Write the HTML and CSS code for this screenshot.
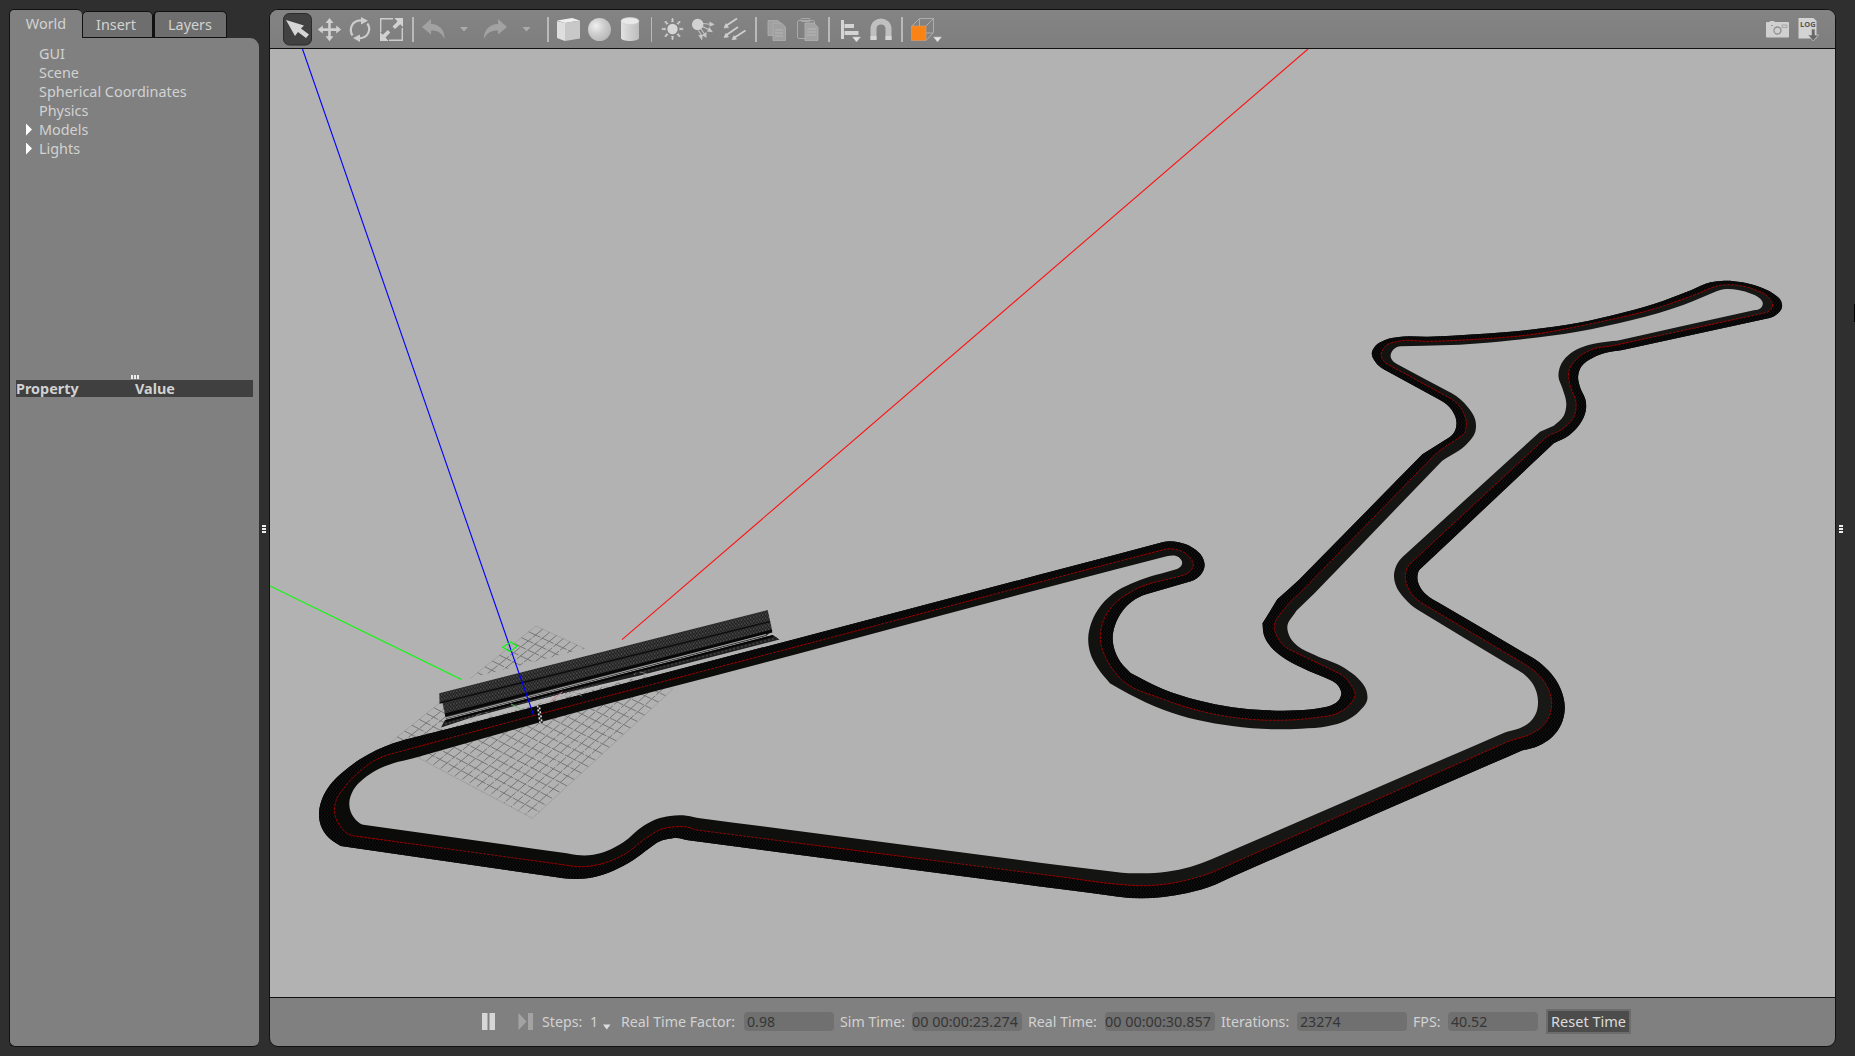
FILE: index.html
```html
<!DOCTYPE html>
<html lang="en">
<head>
<meta charset="utf-8">
<title>Gazebo</title>
<link rel="stylesheet" href="styles.css">
</head>
<body>
<div class="window">
  <aside class="sidebar">
    <nav class="tabs">
      <div class="tab tab-active">World</div>
      <div class="tab tab-insert">Insert</div>
      <div class="tab tab-layers">Layers</div>
    </nav>
    <div class="panel">
      <ul class="tree">
        <li>GUI</li>
        <li>Scene</li>
        <li>Spherical Coordinates</li>
        <li>Physics</li>
        <li class="branch">Models</li>
        <li class="branch">Lights</li>
      </ul>
      <div class="grip grip-h"><i></i><i></i><i></i></div>
      <div class="props"><span>Property</span><span>Value</span></div>
    </div>
  </aside>
  <div class="splitter"><div class="grip grip-v"><i></i><i></i><i></i></div></div>
  <main class="main">
    <header class="toolbar">
      <svg width="39" height="38" viewBox="274 10 39 38"><rect x="283.5" y="13.5" width="28" height="31.500" rx="6" fill="#414141" stroke="#2b2b2b"/><path d="M286 20 L304 25.500 L301 28.500 L309 34.500 L306 38 L298 32 L295 36 Z" fill="#d6d6d6"/></svg>
      <svg width="32" height="38" viewBox="313 10 32 38"><g fill="#d0d0d0"><path d="M329.500 18 l4 5 h-2.700 v5.300 h5.400 v-2.700 l5 4 l-5 4 v-2.700 h-5.400 v5.300 h2.700 l-4 5 l-4 -5 h2.700 v-5.300 h-5.400 v2.700 l-5 -4 l5 -4 v2.700 h5.400 v-5.300 h-2.700z"/></g></svg>
      <svg width="31" height="38" viewBox="345 10 31 38"><g fill="none" stroke="#cdcdcd" stroke-width="2.200"><path d="M352.500 35.500 C349 30 351 20.500 361 20.300"/><path d="M367.300 23.500 C371.500 29 368.500 38 359 38.300"/></g><path d="M361 17 l7 3.800 l-7 3.600z M360 34.500 l-7 3.600 l7 4z" fill="#cdcdcd"/></svg>
      <svg width="31" height="38" viewBox="376 10 31 38"><g fill="none" stroke="#cdcdcd" stroke-width="1.400"><path d="M393 18.700 H380.700 V32 M389 40.300 H402.300 V28"/></g><path d="M403 18 v9 l-2.800 -2.700 l-5.200 4.700 l-2.500 -2.500 l5 -5 l-3 -3.500z M380 41 v-9 l2.800 2.700 l5 -4.700 l2.500 2.500 l-4.800 5 l3 3.500z" fill="#d2d2d2"/></svg>
      <i class="sep sep-a"></i>
      <svg width="30" height="38" viewBox="419 10 30 38"><path d="M422 27 L431 19 V24 C440 24 445 31 444.500 39 C442 33 438 30.500 431 30.500 V34.500Z" fill="#a2a2a2"/></svg>
      <svg width="30" height="38" viewBox="449 10 30 38"><path d="M460 27h8l-4 4.500z" fill="#ababab"/></svg>
      <svg width="32" height="38" viewBox="479 10 32 38"><path d="M507 27 L498 19 V24 C489 24 483.500 31 484 39 C486.500 33 491 30.500 498 30.500 V34.500Z" fill="#a2a2a2"/></svg>
      <svg width="30" height="38" viewBox="511 10 30 38"><path d="M522.500 27h8l-4 4.500z" fill="#ababab"/></svg>
      <i class="sep sep-b"></i>
      <svg width="28" height="38" viewBox="555 10 28 38"><path d="M557 21l8 2v18l-8-3z" fill="#dedede"/><path d="M557 20.500l15-2.500 8 2.500-15 2.500z" fill="#eee"/><path d="M565 23l15-2.500v18l-15 2.500z" fill="#c8c8c8"/></svg>
      <svg width="33" height="38" viewBox="583 10 33 38"><defs><radialGradient id="ball" cx=".35" cy=".35" r=".7"><stop offset="0" stop-color="#f0f0f0"/><stop offset=".5" stop-color="#cecece"/><stop offset="1" stop-color="#b8b8b8"/></radialGradient></defs><circle cx="599.500" cy="29.500" r="11.500" fill="url(#ball)"/></svg>
      <svg width="29" height="38" viewBox="616 10 29 38"><defs><linearGradient id="cyl"><stop offset="0" stop-color="#e2e2e2"/><stop offset="1" stop-color="#bcbcbc"/></linearGradient></defs><path d="M621 21v17c0 4 18 4 18 0v-17z" fill="url(#cyl)"/><ellipse cx="630" cy="21" rx="9" ry="3.500" fill="#e9e9e9" stroke="#cfcfcf" stroke-width=".6"/></svg>
      <i class="sep sep-c"></i>
      <svg width="30" height="38" viewBox="658 10 30 38"><circle cx="672.500" cy="29" r="5.200" fill="#d6d6d6"/><g id="rays" fill="#cfcfcf"><path id="ray" d="M671 22 h3 l-1 -2.200 h1 l-1.500 -2 l-1.500 2 h1z"/><use href="#ray" transform="rotate(45 672.500 29)"/><use href="#ray" transform="rotate(90 672.500 29)"/><use href="#ray" transform="rotate(135 672.500 29)"/><use href="#ray" transform="rotate(180 672.500 29)"/><use href="#ray" transform="rotate(225 672.500 29)"/><use href="#ray" transform="rotate(270 672.500 29)"/><use href="#ray" transform="rotate(315 672.500 29)"/></g></svg>
      <svg width="31" height="38" viewBox="688 10 31 38"><circle cx="697.700" cy="24.500" r="5.700" fill="#d2d2d2"/><g stroke="#c6c6c6" stroke-width="1.100" fill="#cdcdcd"><path d="M703 23.500 l7 .7 m0-1.700 l3.500 2 l-3.500 1.500z M702.500 26.500 l6 3 m.8-1.500 l2.500 3.500 l-4-.5z M701 29 l3.500 5 m1.400-1 l0 4 l-3-2z M698.500 30.500 l3.200 5 m-2.500 0 l3 0 l-.5 3.500z"/></g></svg>
      <svg width="31" height="38" viewBox="719 10 31 38"><g stroke="#cecece" stroke-width="1.800" fill="#cecece"><path d="M737 18.500L725 26.500M738 27L725 36M745.500 30.500L733 38.500"/><path d="M724 28l2-4.500 2.500 4zM724 37.500l2-4.200 2.500 3.700zM732 39.700l2-4.200 2.500 3.700z" stroke-width=".6"/></g></svg>
      <i class="sep sep-a"></i>
      <svg width="30" height="38" viewBox="762 10 30 38"><g fill="#a0a0a0" stroke="#b0b0b0" stroke-width=".8"><path d="M768 20.500h10l3 3v12h-13z"/><path d="M773 23h8.500l4 4v13.500h-12.500z"/></g><path d="M775 30h8M775 33h8M775 36h8" stroke="#b4b4b4"/></svg>
      <svg width="31" height="38" viewBox="792 10 31 38"><g fill="none" stroke="#a9a9a9"><rect x="797.500" y="20.500" width="17" height="18" rx="1.500"/><rect x="801" y="18.500" width="9" height="3" rx="1"/></g><path d="M805 23h9l4 4.500v13h-13z" fill="#a2a2a2" stroke="#b2b2b2" stroke-width=".8"/><path d="M807 29h9M807 32h9M807 35h9" stroke="#b6b6b6"/></svg>
      <i class="sep sep-a"></i>
      <svg width="30" height="38" viewBox="835 10 30 38"><path d="M841 20h3v19h-3z M844.500 24h9.500v4h-9.500z M844.500 31h14v4h-14z" fill="#d4d4d4"/><path d="M852.500 37h8l-4 5z" fill="#e2e2e2" stroke="#bbb" stroke-width=".6"/></svg>
      <svg width="31" height="38" viewBox="865 10 31 38"><path d="M873.500 40v-11c0-10 15-10 15 0v11" fill="none" stroke="#c0c0c0" stroke-width="6"/><path d="M873.500 40v-4M888.500 40v-4" stroke="#d6d6d6" stroke-width="6"/></svg>
      <i class="sep sep-a"></i>
      <svg width="34" height="38" viewBox="908 10 34 38"><g fill="none" stroke="#adadad" stroke-width="1"><path d="M912 26l7.500-7.500h14l-7.500 7.500M933.500 18.500v14l-7.500 8M919.500 18.500v15.500M912 40.500l7.500-7.500h14"/></g><rect x="911.500" y="26" width="14.500" height="14.500" fill="#f98415" stroke="#d8a070" stroke-width=".6"/><path d="M933.500 37h8l-4 5z" fill="#e4e4e4" stroke="#bbb" stroke-width=".6"/></svg>
      <span class="spring"></span>
      <svg width="32" height="38" viewBox="1762 10 32 38"><path d="M1767 22h2.500l.6-1h4l.6 1h13.300q1 0 1 1v13.500q0 1-1 1h-21q-1 0-1-1v-13.500q0-1 1-1z" fill="#d0d0d0"/><circle cx="1777.500" cy="30.500" r="3.500" fill="none" stroke="#8f8f8f" stroke-width="1.300"/><path d="M1782 25h5v2.500h-5z" fill="none" stroke="#9a9a9a" stroke-width=".8"/><path d="M1771 25.500h2" stroke="#999"/></svg>
      <svg class="log-icon" width="30" height="38" viewBox="1794 10 30 38"><path d="M1798.500 18h15l3 3v17.500h-18z" fill="#d3d3d3"/><text x="1800" y="27" class="log-text">LOG</text><path d="M1811.500 29h3.500v6h3.500l-5.300 6-5.200-6h3.500z" fill="#686868" stroke="#c8c8c8" stroke-width=".7"/></svg>
    </header>
    <div class="view">
      <svg id="scene" width="1565" height="948" viewBox="270 49 1565 948">
        <defs>
          <linearGradient id="asphalt" gradientUnits="userSpaceOnUse" x1="300" y1="300" x2="1300" y2="1000"><stop offset="0" stop-color="#0a0a09"/><stop offset=".4" stop-color="#0b0b0a"/><stop offset=".62" stop-color="#10100e"/><stop offset="1" stop-color="#181817"/></linearGradient>
          <pattern id="hatch" width="3" height="4" patternUnits="userSpaceOnUse"><rect width="3" height="4" fill="#050505"/><path d="M0 0h1v2h-1zM1.500 2h1v2h-1z" fill="#101010"/></pattern>
          <pattern id="seats" width="3" height="4" patternUnits="userSpaceOnUse" patternTransform="skewY(-14)"><rect width="3" height="4" fill="#202020"/><path d="M0 0h1.500v2h-1.500z" fill="#474747"/><path d="M1.500 2h1.500v2h-1.500z" fill="#3b3b3b"/></pattern>
        </defs>
        <g id="grid"></g>
        <path d="M436 688L473 677.500 587 648 650 640 640 660 440 700z" fill="#b2b2b2"/>
        <path id="inner-half" fill="url(#asphalt)" fill-rule="evenodd"/>
        <path id="outer-half" fill="url(#hatch)" fill-rule="evenodd"/>
        <path id="centre-line" class="centre-line"/>
        <path d="M441 729L446 718 774 634 780 639.500 446 728.500z" fill="#b9b9b9"/>
        <path d="M445 720L773 635 779.500 639.500 640 675.500 560 694 470 718 441 727.500z" fill="#1e1e1e"/>
        <path d="M445 724L500 708 600 684M640 672.500L777 638" class="seat-row"/>
        <path d="M470 720l14-9 8 5M560 697l14-5 8 4M634 675l3-4 10 3" class="rail"/>
        <path d="M439.300 693.300L767.700 610 772.300 631 766 636 446 719 442.500 703 439.500 702z" fill="url(#seats)"/>
        <path d="M439.500 703L770 621.500" stroke="#0e0e0e" stroke-width="1.500"/>
        <path d="M445 715L772 631" stroke="#080808" stroke-width="3"/>
        <path d="M445.500 718L766 634.500" stroke="#aaa" stroke-width="1.100"/>
        <path d="M446 721L773 636" stroke="#060606" stroke-width="2"/>
        <path d="M538.500 705.500L541 723" stroke="#111" stroke-width="4"/>
        <path d="M537.500 705.500L540 723" stroke="#ddd" stroke-width="1.600" stroke-dasharray="2 2"/>
        <path d="M539.500 707.500L542 723" stroke="#ddd" stroke-width="1.600" stroke-dasharray="2 2"/>
        <path d="M550.300 701.700L562.300 691.700" stroke="#c98080"/>
        <path d="M511 704L520.700 709" stroke="#6fae6f"/>
        <path d="M302.500 49L533.500 715" class="axis axis-z"/>
        <path d="M1308 49L622 639.700" class="axis axis-x"/>
        <path d="M270 586L461.500 679.500" class="axis axis-y"/>
        <path d="M502.700 647.300L510.700 642 517.300 646 510 651.700z" class="axis axis-y"/>
      </svg>
    </div>
    <footer class="status">
      <svg class="play" width="66" height="24" viewBox="474 1010 66 24"><path d="M482 1013h5.500v17h-5.500zM489.500 1013h5.500v17h-5.500z" fill="#d6d6d6"/><path d="M518.500 1013l8 8.500-8 8.500zM528 1013h5v17h-5z" fill="#a3a3a3"/></svg>
      <span class="lbl w-steps">Steps:</span><span class="lbl w-one">1</span>
      <svg class="step-caret" width="10" height="24" viewBox="602 1010 10 24"><path d="M603 1024.500h7.500l-3.700 5z" fill="#ddd"/></svg>
      <span class="lbl w-rtf">Real Time Factor:</span><span class="field f-s">0.98</span>
      <span class="lbl w-sim">Sim Time:</span><span class="field f-l clock">00 00:00:23.274</span>
      <span class="lbl w-real">Real Time:</span><span class="field f-l clock">00 00:00:30.857</span>
      <span class="lbl w-iter">Iterations:</span><span class="field f-l">23274</span>
      <span class="lbl w-fps">FPS:</span><span class="field f-s">40.52</span>
      <button class="reset">Reset Time</button>
    </footer>
  </main>
  <div class="splitter splitter-right"><div class="grip grip-v"><i></i><i></i><i></i></div></div>
  <div class="edge-mark"></div>
</div>
<script src="scene.js"></script>
</body>
</html>
```
FILE: styles.css
```css
* { box-sizing: border-box; }
body {
  margin: 0;
  background: #2f2f2f;
  color: #d2d2d2;
  font: 14.4px/19px "Noto Sans", sans-serif;
  overflow: hidden;
}
.window { display: flex; width: 1855px; height: 1056px; padding: 9px 0 9px 9px; position: relative; }
svg { display: block; flex: none; }

.sidebar { width: 250px; display: flex; flex-direction: column; }
.tabs { display: flex; align-items: flex-end; height: 29px; flex: none; }
.tab {
  width: 71px; height: 27px; line-height: 25px; text-align: center;
  background: #6e6e6e; border: 1px solid #111; border-radius: 5px 5px 0 0;
}
.tab-insert { padding-right: 3px; }
.tab-layers { width: 74px; border-left-width: 2px; padding-right: 1px; }
.tab-active {
  width: 73px; height: 29px; line-height: 27px;
  background: #808080; border-bottom: 0; border-right: 0;
}
.panel {
  flex: 1; background: #808080; border-left: 1px solid #111; border-bottom: 1px solid #111;
  border-radius: 0 9px 6px 6px; padding: 6px 6px 0; display: flex; flex-direction: column;
}
.tree { list-style: none; margin: 0; padding: 0 0 0 23px; height: 331px; }
.tree li { display: flex; align-items: center; height: 19px; }
.branch::before {
  content: ""; width: 6px; height: 12px; margin: 0 7px 0 -13px;
  background: #fff; clip-path: polygon(0 0, 100% 50%, 0 100%);
}
.grip { display: flex; gap: 1px; }
.grip i { width: 2px; height: 4px; background: #eee; }
.grip-h { height: 4px; justify-content: center; margin-bottom: 1px; padding-left: 1px; }
.grip-v { flex-direction: column; margin-top: 2px; }
.grip-v i { width: 4px; height: 2px; }
.props { display: grid; grid-template-columns: 119px 1fr; background: #404040; height: 17px; line-height: 18px; font-weight: bold; font-size: 14.4px; }

.splitter { width: 10px; display: flex; align-items: center; justify-content: center; padding-right: 1px; }
.splitter-right { width: 9px; padding: 0 0 0 1px; }

.main {
  width: 1567px; display: flex; flex-direction: column; background: #808080;
  border: 1px solid #111; border-radius: 9px; overflow: hidden;
}
.toolbar {
  display: flex; align-items: center; height: 39px; flex: none; padding: 0 11px 0 4px;
  background: linear-gradient(#848484, #7e7e7e); border-bottom: 1px solid #111;
}
.spring { flex: 1; }
.sep { display: flex; justify-content: center; height: 25px; flex: none; }
.sep::before { content: ""; width: 1.500px; background: #b9b9b9; }
.sep-a { width: 12px; }
.sep-b { width: 14px; }
.sep-c { width: 13px; }
.log-text { font: bold 7.5px "Open Sans", sans-serif; fill: #555; }

.view { height: 948px; flex: none; background: #b2b2b2; }
.axis { fill: none; stroke-width: 1.100; }
.axis-x { stroke: #f11; }
.axis-y { stroke: #0f0; }
.axis-z { stroke: #00f; }
.centre-line { fill: none; stroke: #a60000; stroke-width: .9; stroke-dasharray: 3 1; }
.seat-row { fill: none; stroke: #3c3c3c; stroke-width: 2; stroke-dasharray: 2 2; }
.rail { fill: none; stroke: #999; stroke-width: .7; }
.grid-line { fill: none; stroke: #707070; stroke-width: .9; stroke-dasharray: 13 1.500; }
.grid-edge { fill: none; stroke: #9c9c9c; stroke-width: .8; }

.status { flex: 1; border-top: 1px solid #111; display: flex; align-items: center; padding: 0 0 1px 204px; font-size: 14.2px; }
.lbl { flex: none; white-space: nowrap; }
.play { margin-right: 2px; }
.w-steps { width: 48px; }
.w-one { width: 12px; }
.step-caret { margin-right: 9px; }
.w-rtf { width: 123px; }
.w-sim, .w-real, .w-iter, .w-fps { margin-left: 6px; }
.w-sim { width: 72px; }
.w-real { width: 77px; }
.w-iter { width: 76px; }
.w-fps { width: 35px; }
.field {
  flex: none; height: 19px; line-height: 19px; background: #707070; color: #363636;
  border-radius: 4px; padding-left: 3px; white-space: nowrap; overflow: hidden;
}
.clock { padding-left: 0; font-size: 14.4px; }
.f-s { width: 90px; }
.f-l { width: 110px; }
.reset {
  margin-left: 8px; width: 85px; height: 25px; padding: 0; border: 2px solid #6c6c6c;
  background: #4c4c4c; color: #dcdcdc; font: inherit; font-size: 14.5px; white-space: nowrap;
}
.edge-mark { position: absolute; right: 0; top: 304px; width: 1px; height: 18px; background: #000; }
```
FILE: scene.js
```js
// Track edges and racing line in viewport pixels, flat x,y lists of closed loops.
const OUTER = [538.3,705.7,416.7,736.7,393.3,743.3,376.7,750,360,759.3,343.3,771.7,330,785,321.7,800,319,813.3,321,826,328.3,837.3,340.7,846,556.7,877.3,576.7,879,593.3,877.3,613.3,870.7,633.3,860,650,847.7,658.3,842,666.7,839.3,676.7,838,688.3,840.3,800,855,1060,889,1118.5,896.7,1140.9,898.3,1163.3,897,1187.4,893,1215,884.7,1232.2,876.7,1521.4,750.7,1538.6,745.7,1552.4,736.7,1561,724.7,1564.8,708.7,1562.8,695,1555.9,680,1545.5,667.7,1531.8,657.3,1438.8,602.7,1426.7,595,1419.9,586.7,1417.4,578.3,1420,569.3,1553.8,443.3,1569.5,435,1580.4,423.3,1585.9,410,1585.9,401.7,1579.7,386,1578.1,376.7,1581.2,366.7,1593,357.7,1604.8,353,1622.4,350,1769.5,318,1778.1,313.3,1782,307.3,1780.5,300,1773.4,293.7,1757.7,286.3,1742,282.3,1724.4,280.7,1710.7,282.3,1691,290.3,1663.6,300.7,1624.4,312.3,1577.3,323,1530.2,329.7,1475.3,334.3,1428.3,336.7,1398.8,337,1385.1,340,1375.3,346,1371.8,353.3,1375.3,361.7,1383.2,369,1440,400,1451.8,410,1456.5,422.7,1454.5,431.7,1447.9,438.3,1422.4,454.3,1298.8,580,1277.3,599.3,1262.5,623.3,1263.9,635,1270.7,646.7,1282.1,656.7,1301,667.3,1330.3,680,1338.9,686.7,1341.3,693.3,1338.9,700,1332,705,1321.7,707.7,1297.6,710.3,1266.6,710.3,1232.2,707.3,1197.7,700.3,1163.3,689.3,1130.6,673,1120.3,661.7,1114.1,648.3,1112.7,636.7,1115.1,625,1122,611.7,1132.3,601.3,1146.1,594.3,1190.9,581.3,1200.5,575,1204.6,565.7,1202.2,556.7,1192.6,547.7,1178.8,542.3,1163.3,542,1060,569.3,800,637.7];
const INNER = [540,722.3,413.3,758.3,393.3,763.3,376.7,770,363.3,779,353.3,790,349.3,803.3,351.7,814,356.7,820.7,363.3,824.7,566.7,853.3,576.7,855,593.3,854.7,606.7,851,623.3,842.3,643.3,826,656.7,819,670,816,686.7,815.7,700,818.3,800,831.3,1060,865.3,1122,872.7,1142.6,873.3,1166.7,871.7,1190.9,866.7,1211.5,859.3,1504.2,732.7,1519.7,728.3,1530,722,1536.6,711.7,1538,701.7,1533.5,685,1524.9,675,1516.3,669.3,1418.1,610,1404.4,598.3,1395.7,585,1394,575,1397.5,563.3,1402.5,557,1540,431.7,1553.8,425.7,1563.6,416,1566.3,405,1562.4,388.3,1558.5,376.7,1561.6,363.3,1570.6,353.3,1583.2,346.7,1604.8,342,1620.4,340,1753.8,310.3,1760.9,308,1762.8,303.3,1759.7,298.3,1751.8,294,1738.1,290,1726.3,289,1716.5,291.3,1683.2,305,1632.2,320,1577.3,331.7,1514.6,340,1459.6,344.7,1424.3,345.7,1400.8,346.3,1393,350,1390.6,356,1396.9,364,1451.8,393.3,1467.5,406.7,1475.3,420,1475.3,431.7,1467.5,443.3,1442,461,1314.5,593.3,1296.4,610.8,1287.3,627.3,1290,637.3,1297.6,646,1314.8,655,1344.1,667.7,1357.9,678.3,1366.5,690.7,1367.2,700,1359.6,711,1345.8,720.7,1328.6,726,1301,728.7,1273.5,729.3,1232.2,726,1197.7,720,1163.3,709.7,1128.9,694,1109.9,683.3,1097.9,668.3,1090.3,653.3,1088.2,638.3,1091.7,621.7,1101.3,605,1116.8,591,1135.8,581.7,1177.1,569,1182.2,563.3,1178.8,557.3,1166.7,556.3,1060,584,800,653.3];
const CENTRE = [533.3,715.7,393.3,753.3,376.7,759.3,360,771,345,786.7,335.7,801.7,334.7,813.3,340,826,352.7,835.7,560,864.3,583.3,866.7,603.3,863.3,623.3,855,646.7,837.7,660,829.7,676.7,826.7,686.7,827,696.7,830,800,843.3,1060,876.7,1118.5,884.3,1142.6,885.7,1166.7,884,1190.9,879,1215,871,1507.7,741.7,1530,734.3,1542.1,726.7,1549,716.7,1551.7,705,1547.3,686.7,1536.9,673.3,1523.2,663.3,1425,605,1411.2,593.3,1405.4,578.3,1407.8,566.7,1412,562,1545.9,437.7,1563.6,428.3,1574.6,415,1576.1,403.3,1569.5,383.3,1568.7,371.7,1577.3,358.3,1593,349,1612.6,345.7,1765.6,312.7,1772.6,306,1769.5,298.3,1753.8,289.3,1738.1,285.3,1720.5,285.3,1695,294.7,1655.8,308.3,1593,323.3,1530.2,334.7,1475.3,339.3,1428.3,341.3,1398.8,341.3,1385.1,346.3,1381.2,354,1387.1,364,1447.9,397,1461.6,409.3,1466.3,423.3,1462.8,435,1432.2,457.3,1302.8,590,1285.3,607.6,1274.2,627.3,1278.7,639.3,1289,649.3,1338.9,673.3,1351,685,1355.1,694.3,1349.3,705,1337.2,713.3,1314.8,717.7,1273.5,720.3,1215,714.3,1163.3,699.3,1122,680,1108.2,662.3,1100.6,641.7,1103,621.7,1113.4,605,1132.3,591,1184,575,1193.3,565,1187.4,555,1175.4,549.3,1163.3,549.7,1060,576.7,800,645.7];

// Vertices where the road mesh has a hard corner (x coordinates).
const CORNERS = new Set([1422.4, 1298.8, 1277.3, 1262.5, 1109.9, 1130.6, 340.7, 1442, 1314.5, 1296.4, 1540, 1553.8, 1521.4]);

// Smooth closed curve; long straights keep their own direction at both ends.
function loop(flat) {
  const p = [];
  for (let i = 0; i < flat.length; i += 2) p.push([flat[i], flat[i + 1]]);
  const n = p.length;
  const seg = p.map((a, i) => {
    const b = p[(i + 1) % n], dx = b[0] - a[0], dy = b[1] - a[1], l = Math.hypot(dx, dy);
    return { l, x: dx / l, y: dy / l };
  });
  const tan = p.map((_, i) => {
    const a = seg[(i + n - 1) % n], b = seg[i];
    if (a.l > 2.5 * b.l) return a;
    if (b.l > 2.5 * a.l) return b;
    const x = a.x * b.l + b.x * a.l, y = a.y * b.l + b.y * a.l, l = Math.hypot(x, y);
    return { x: x / l, y: y / l };
  });
  let d = `M${p[0]}`;
  for (let i = 0; i < n; i++) {
    const j = (i + 1) % n, h = seg[i].l / 3;
    const s = CORNERS.has(p[i][0]) ? seg[i] : tan[i];
    const e = CORNERS.has(p[j][0]) ? seg[i] : tan[j];
    d += `C${p[i][0] + s.x * h},${p[i][1] + s.y * h} ${p[j][0] - e.x * h},${p[j][1] - e.y * h} ${p[j]}`;
  }
  return d + "Z";
}

const outer = loop(OUTER), inner = loop(INNER), centre = loop(CENTRE);
document.getElementById("inner-half").setAttribute("d", outer + inner);
document.getElementById("outer-half").setAttribute("d", outer + centre);
document.getElementById("centre-line").setAttribute("d", centre);

// Ground grid, 20 x 20 cells.
const T = [536, 626], R = [672.7, 689.3], B = [532.3, 818.3], L = [390, 742.7];
const mix = (a, b, t) => [a[0] + (b[0] - a[0]) * t, a[1] + (b[1] - a[1]) * t];
let lines = "";
for (let i = 0; i <= 20; i++) {
  const cls = i % 20 ? "grid-line" : "grid-edge", t = i / 20;
  lines += `<path class="${cls}" d="M${mix(T, R, t)}L${mix(L, B, t)}"/>`;
  lines += `<path class="${cls}" d="M${mix(T, L, t)}L${mix(R, B, t)}"/>`;
}
document.getElementById("grid").innerHTML = lines;
```
